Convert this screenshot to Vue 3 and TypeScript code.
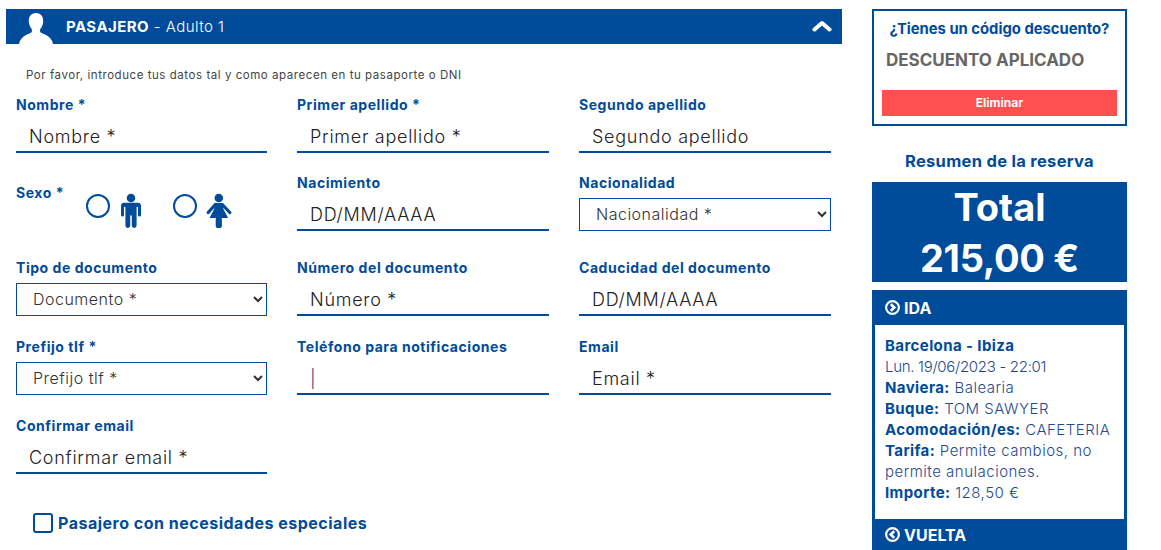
<script setup lang="ts">
interface Field { label: string; kind: 'input' | 'select' | 'sexo'; ph?: string; value?: string }
const rows: Field[][] = [
  [
    { label: 'Nombre *', kind: 'input', ph: 'Nombre *' },
    { label: 'Primer apellido *', kind: 'input', ph: 'Primer apellido *' },
    { label: 'Segundo apellido', kind: 'input', ph: 'Segundo apellido' },
  ],
  [
    { label: 'Sexo *', kind: 'sexo' },
    { label: 'Nacimiento', kind: 'input', ph: 'DD/MM/AAAA' },
    { label: 'Nacionalidad', kind: 'select', ph: 'Nacionalidad *' },
  ],
  [
    { label: 'Tipo de documento', kind: 'select', ph: 'Documento *' },
    { label: 'Número del documento', kind: 'input', ph: 'Número *' },
    { label: 'Caducidad del documento', kind: 'input', ph: 'DD/MM/AAAA' },
  ],
  [
    { label: 'Prefijo tlf *', kind: 'select', ph: 'Prefijo tlf *' },
    { label: 'Teléfono para notificaciones', kind: 'input', value: '|' },
    { label: 'Email', kind: 'input', ph: 'Email *' },
  ],
  [{ label: 'Confirmar email', kind: 'input', ph: 'Confirmar email *' }],
]
const details: [string, string][] = [
  ['Naviera:', 'Balearia'],
  ['Buque:', 'TOM SAWYER'],
  ['Acomodación/es:', 'CAFETERIA'],
  ['Tarifa:', 'Permite cambios, no permite anulaciones.'],
  ['Importe:', '128,50 €'],
]
</script>

<template>
  <div class="page">
    <main class="main">
      <header class="bar">
        <svg class="avatar" viewBox="0 0 34 31" width="34" height="31">
          <path fill="#fff" d="M17 0c5 0 7.600 3.600 7.200 8.600-.2 3-1.200 5.400-2.700 7.100-.8 1-.7 3.300.5 4 2.500 1.500 10.500 3 12 11.300H0c1.500-8.300 9.500-9.800 12-11.300 1.200-.7 1.300-3 .5-4-1.500-1.700-2.500-4.100-2.700-7.100C9.400 3.600 12 0 17 0z"/>
        </svg>
        <span class="bar-title"><b>PASAJERO</b> - Adulto 1</span>
        <svg class="chev" viewBox="0 0 20 12" width="20" height="12">
          <path d="M2.500 9.500 10 3l7.500 6.500" fill="none" stroke="#fff" stroke-width="4" stroke-linecap="round" stroke-linejoin="round"/>
        </svg>
      </header>
      <p class="hint">Por favor, introduce tus datos tal y como aparecen en tu pasaporte o DNI</p>
      <div class="form">
        <template v-for="(row, r) in rows" :key="r">
          <div v-for="f in row" :key="f.label" class="field" :class="{ 'sexo-field': f.kind === 'sexo' }">
            <label class="lbl">{{ f.label }}</label>
            <input v-if="f.kind === 'input'" class="inp" :placeholder="f.ph" :value="f.value" :class="{ caret: f.value }" />
            <select v-else-if="f.kind === 'select'" class="sel"><option>{{ f.ph }}</option></select>
            <div v-else class="sexo">
              <span class="radio"></span>
              <svg class="fig" viewBox="0 0 22 36" width="22" height="36">
                <circle cx="11" cy="5" r="4.300" fill="#004b9a"/>
                <path fill="#004b9a" d="M4 9.800h14c1.700 0 3 1.300 3 3v9.200a1.500 1.500 0 0 1-3 0v-8h-1.400v18.500a2.400 2.400 0 0 1-4.800 0V22.500h-1.600v10a2.400 2.400 0 0 1-4.800 0V14H4v8a1.500 1.500 0 0 1-3 0v-9.200c0-1.700 1.300-3 3-3z"/>
              </svg>
              <span class="radio second"></span>
              <svg class="fig" viewBox="0 0 26 36" width="26" height="36">
                <circle cx="12.800" cy="5" r="4.300" fill="#004b9a"/>
                <path fill="#004b9a" d="M9 10h7.600l.8 6 4.700 9H3.500l4.700-9z"/>
                <path d="M9.300 11.500 2.200 19.500M16.300 11.500l7.500 8" stroke="#004b9a" stroke-width="3.200" stroke-linecap="round" fill="none"/>
                <rect x="9.700" y="24" width="6.200" height="11" rx="2.600" fill="#004b9a"/>
              </svg>
            </div>
          </div>
        </template>
      </div>
      <label class="special"><span class="box"></span>Pasajero con necesidades especiales</label>
    </main>

    <aside class="side">
      <section class="promo">
        <h3>¿Tienes un código descuento?</h3>
        <div class="applied">DESCUENTO APLICADO</div>
        <button class="remove">Eliminar</button>
      </section>
      <h2 class="resume">Resumen de la reserva</h2>
      <div class="total">
        <div>Total</div>
        <div class="amount">215,00 €</div>
      </div>
      <section class="trip">
        <div class="trip-h">
          <svg viewBox="0 0 16 16" width="15" height="15"><circle cx="8" cy="8" r="6.800" fill="none" stroke="#fff" stroke-width="2.300"/><path d="M6.200 4.400 9.800 8l-3.600 3.600" fill="none" stroke="#fff" stroke-width="3"/></svg>
          IDA
        </div>
        <div class="trip-body">
          <div class="route">Barcelona - Ibiza</div>
          <div class="date">Lun. 19/06/2023 - 22:01</div>
          <div v-for="d in details" :key="d[0]"><b>{{ d[0] }}</b> {{ d[1] }}</div>
        </div>
        <div class="trip-h back">
          <svg viewBox="0 0 16 16" width="15" height="15"><circle cx="8" cy="8" r="6.800" fill="none" stroke="#fff" stroke-width="2.300"/><path d="M9.800 4.400 6.200 8l3.600 3.600" fill="none" stroke="#fff" stroke-width="3"/></svg>
          VUELTA
        </div>
      </section>
    </aside>
  </div>
</template>

<style>
html, body { margin: 0; height: 550px; overflow: hidden; background: #fff; }
</style>

<style scoped>
.page {
  display: flex; gap: 30px; padding: 9px 0 0 6px; height: 550px; box-sizing: border-box;
  font-family: Inter, "Liberation Sans", sans-serif; color: #004b9a;
}
.main { width: 836px; flex: none; }
.bar { height: 35px; background: #004b9a; display: flex; align-items: flex-end; color: #fff; padding: 0 10px 0 13px; }
.avatar { display: block; flex: none; }
.bar-title { font-size: 15px; font-weight: 300; letter-spacing: .45px; margin-left: 13px; align-self: center; }
.bar-title b { font-weight: 700; }
.chev { margin-left: auto; align-self: center; margin-bottom: 2px; }
.hint { margin: 24px 0 0 20px; font-size: 11.500px; line-height: 14px; color: #444; letter-spacing: .55px; font-weight: 400; }
.form {
  display: grid; grid-template-columns: 251px 252px 252px; column-gap: 30px;
  margin: 15px 0 0 10px; grid-template-rows: 78px 85px 79px 79px 79px;
}
.lbl { display: block; font-size: 14px; font-weight: 700; line-height: 16px; letter-spacing: .55px; }
.inp {
  display: block; width: 100%; box-sizing: border-box; height: 33px; margin-top: 7px; padding: 2px 12px 0 13px;
  border: 0; border-bottom: 2px solid #004b9a; outline: 0; background: transparent;
  font: 300 18px Inter, sans-serif; letter-spacing: .72px; color: #222;
}
.inp::placeholder { color: #222; opacity: 1; }
.inp.caret { color: #446; }
.sel {
  display: block; width: 100%; height: 33px; margin-top: 7px; box-sizing: border-box; padding: 0 12px 1px;
  border: 1px solid #004b9a; border-radius: 0; background: #fff; outline: 0;
  font: 300 16px Inter, sans-serif; letter-spacing: .5px; color: #333;
}
.sexo-field { display: flex; align-items: flex-start; padding-top: 10px; box-sizing: border-box; }
.sexo-field .lbl { width: 70px; flex: none; }
.sexo { display: flex; align-items: flex-start; }
.fig { display: block; margin-top: 8px; flex: none; }
.radio { width: 24px; height: 24px; box-sizing: border-box; border: 2px solid #004b9a; border-radius: 50%; margin: 9px 10px 0 0; flex: none; }
.radio.second { margin-left: 31px; margin-right: 9px; }
.special { display: flex; align-items: center; gap: 5px; margin: 16px 0 0 27px; font-size: 16px; letter-spacing: .5px; font-weight: 700; }
.box { width: 20px; height: 20px; box-sizing: border-box; border: 2px solid #004b9a; border-radius: 3px; flex: none; }
.side { width: 255px; flex: none; }
.promo { height: 117px; box-sizing: border-box; border: 2px solid #004b9a; padding: 10px 8px 0; }
.promo h3 { margin: 0; font-size: 14.800px; line-height: 17px; text-align: center; font-weight: 700; white-space: nowrap; }
.applied { margin: 13px 0 0 4px; font-size: 17px; font-weight: 700; line-height: 18px; color: #666; }
.remove {
  display: block; width: 100%; height: 26px; margin-top: 21px; padding: 0 0 2px; border: 0; background: #ff5050; color: #fff;
  font: 700 12px Inter, sans-serif;
}
.resume { margin: 25px 0 0; font-size: 16.500px; letter-spacing: .3px; line-height: 20px; text-align: center; font-weight: 700; }
.total { margin-top: 11px; height: 100px; background: #004b9a; color: #fff; text-align: center; font-weight: 700; font-size: 38px; line-height: 50px; }
.amount { letter-spacing: -.3px; margin-top: 1px; }
.trip { margin-top: 8px; background: #004b9a; padding: 0 3px; height: 260px; }
.trip-h { height: 35px; display: flex; align-items: center; gap: 4px; padding-left: 10px; color: #fff; font-size: 16px; font-weight: 700; }
.trip-h.back { height: 31px; }
.trip-body { background: #fff; height: 194px; box-sizing: border-box; padding: 10px 10px 0; font-size: 15px; letter-spacing: .5px; font-weight: 300; line-height: 21px; color: #1f4a8c; }
.date { letter-spacing: -.3px; }
.trip-body b, .route { color: #004b9a; font-weight: 700; letter-spacing: .4px; }
</style>
